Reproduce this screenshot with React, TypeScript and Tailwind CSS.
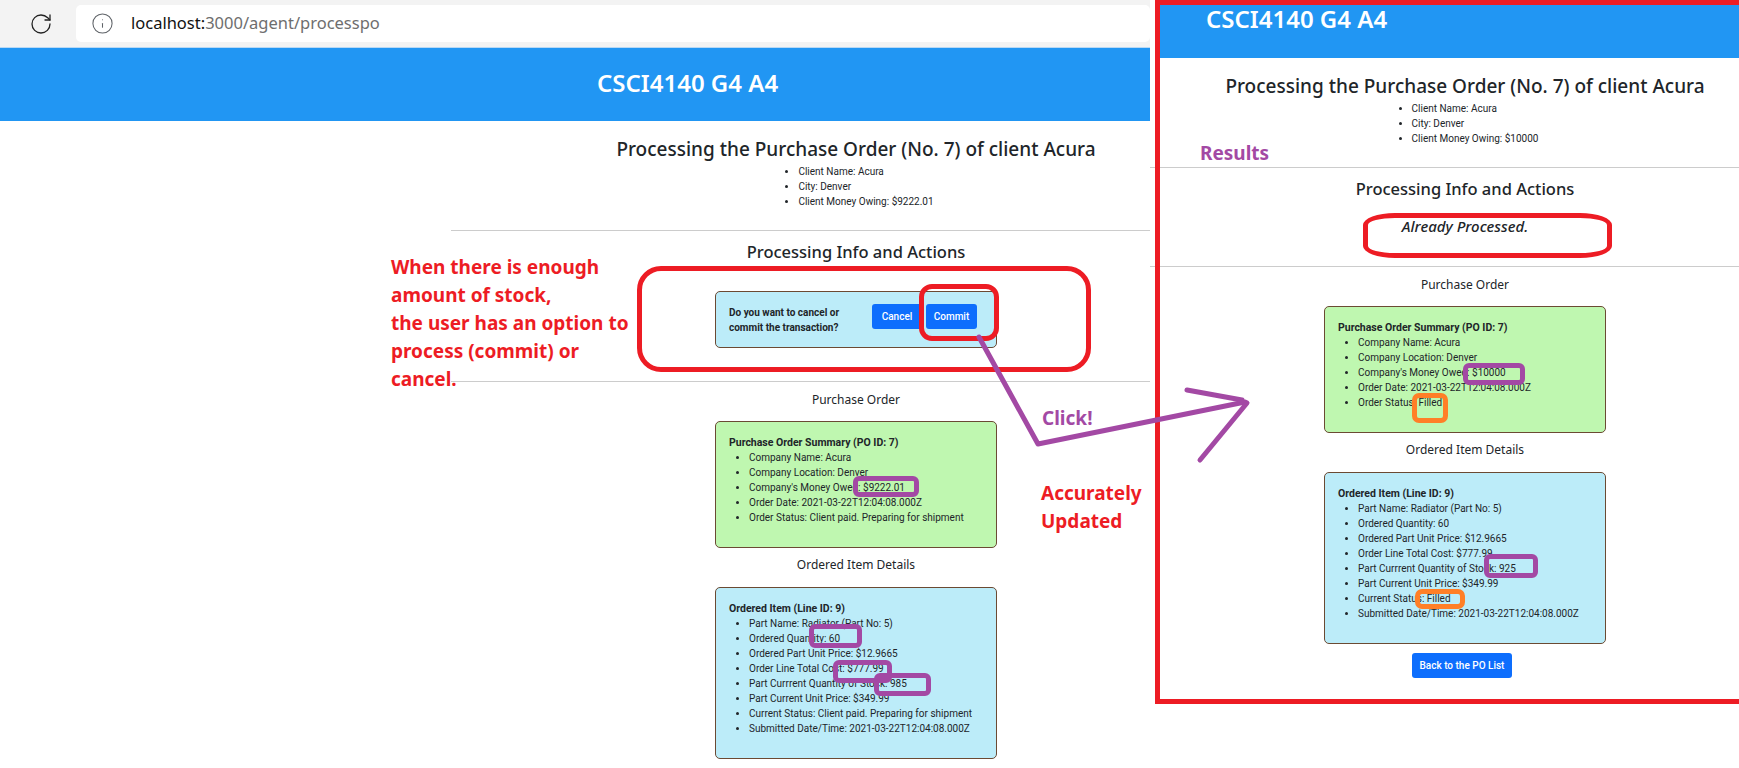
import { Info, RotateCw } from 'lucide-react';

const uiFont = "font-['Noto_Sans','Open_Sans',sans-serif]";
const smallFont = "font-['Roboto','Noto_Sans',sans-serif]";

function Row({ children }: { children: React.ReactNode }) {
  return <li className="h-[15px] whitespace-nowrap">{children}</li>;
}

function InfoBox({ title, color, rows }: { title: string; color: string; rows: string[] }) {
  return (
    <div className={`w-[282px] rounded-[5px] border border-[#6b4a33] pl-[13px] pt-[13px] pb-[22px] text-[10px] leading-[15px] text-[#212529] ${smallFont} ${color}`}>
      <div className="h-[15px] text-[10.5px] font-bold whitespace-nowrap">{title}</div>
      <ul className="list-disc pl-5">
        {rows.map((row) => (
          <Row key={row}>{row}</Row>
        ))}
      </ul>
    </div>
  );
}

function ClientHead({ owing }: { owing: string }) {
  return (
    <>
      <h4 className="mt-4 h-6 text-[19px] leading-6 font-medium whitespace-nowrap">
        Processing the Purchase Order (No. 7) of client Acura
      </h4>
      <ul className={`mt-[3px] list-disc pl-5 text-[10px] leading-[15px] ${smallFont}`}>
        <Row>Client Name: Acura</Row>
        <Row>City: Denver</Row>
        <Row>Client Money Owing: {owing}</Row>
      </ul>
    </>
  );
}

function Divider({ className }: { className: string }) {
  return <div className={`h-px shrink-0 self-stretch bg-[#cccccc] ${className}`}></div>;
}

function Details({ moneyOwed, status, quantity, stock }: { moneyOwed: string; status: string; quantity: string; stock: string }) {
  return (
    <>
      <div className="mt-[9px] h-[18px] text-[12px] leading-[18px]">Purchase Order</div>
      <div className="mt-[12px]">
        <InfoBox
          title="Purchase Order Summary (PO ID: 7)"
          color="bg-[#bff7b0]"
          rows={[
            'Company Name: Acura',
            'Company Location: Denver',
            `Company's Money Owed: ${moneyOwed}`,
            'Order Date: 2021-03-22T12:04:08.000Z',
            `Order Status: ${status}`,
          ]}
        />
      </div>
      <div className="mt-[8px] h-[18px] text-[12px] leading-[18px]">Ordered Item Details</div>
      <div className="mt-[13px]">
        <InfoBox
          title="Ordered Item (Line ID: 9)"
          color="bg-[#bcecf9]"
          rows={[
            'Part Name: Radiator (Part No: 5)',
            `Ordered Quantity: ${quantity}`,
            'Ordered Part Unit Price: $12.9665',
            'Order Line Total Cost: $777.99',
            `Part Currrent Quantity of Stock: ${stock}`,
            'Part Current Unit Price: $349.99',
            `Current Status: ${status}`,
            'Submitted Date/Time: 2021-03-22T12:04:08.000Z',
          ]}
        />
      </div>
    </>
  );
}

export default function App() {
  return (
    <div className={`relative h-[768px] w-[1739px] overflow-hidden bg-white text-[#212529] ${uiFont}`}>
      {/* Left window: before commit */}
      <div className="h-[768px] w-[1150px] overflow-hidden">
        <div className="flex h-[48px] items-center border-b border-[#b9d9f5] bg-[#f3f3f3] pl-[29px]">
          <RotateCw size={24} strokeWidth={1.3} className="text-[#222222]" />
          <div className="ml-[23px] flex h-[37px] flex-1 items-center rounded-[5px] bg-white pl-[15px]">
            <Info size={23} strokeWidth={1.1} className="text-[#5f6368]" />
            <div className="ml-[17px] text-[16.5px] text-[#6e6e6e]">
              <span className="text-[#111111]">localhost:</span>3000/agent/processpo
            </div>
          </div>
        </div>
        <div className="flex h-[73px] items-center bg-[#2196f3] pb-[3px] pl-[597px] text-[24px] font-semibold text-white">
          CSCI4140 G4 A4
        </div>
        <div className="ml-[451px] flex w-[810px] flex-col items-center">
          <ClientHead owing="$9222.01" />
          <Divider className="mt-[21px]" />
          <div className="mt-[10px] h-[22px] text-[16.5px] leading-[22px] font-medium">Processing Info and Actions</div>
          <div className="mt-[28px] flex h-[57px] w-[282px] items-center rounded-[5px] border border-[#6b4a33] bg-[#bcecf9] pl-[13px]">
            <div className={`w-[143px] pr-4 text-[10px] leading-[15px] font-bold ${smallFont}`}>
              Do you want to cancel or commit the transaction?
            </div>
            <div className={`mb-[6px] flex gap-1 ${smallFont}`}>
              <button className="h-[25px] w-[50px] rounded-[3px] bg-[#0d6efd] text-[10px] font-medium text-white">Cancel</button>
              <button className="h-[25px] w-[51px] rounded-[3px] bg-[#0d6efd] text-[10px] font-medium text-white">Commit</button>
            </div>
          </div>
          <Divider className="mt-[33px]" />
          <Details moneyOwed="$9222.01" status="Client paid. Preparing for shipment" quantity="60" stock="985" />
        </div>
      </div>

      {/* Right window: after commit, pasted over the first one */}
      <div className="absolute top-0 left-[1150px] h-[704px] w-[589px] overflow-hidden bg-white">
        <div className="ml-[5px] flex h-[58px] items-center bg-[#2196f3] pb-[20px] pl-[51px] text-[24px] font-semibold text-white">
          CSCI4140 G4 A4
        </div>
        <div className="flex w-[630px] flex-col items-center">
          <ClientHead owing="$10000" />
          <Divider className="mt-[21px]" />
          <div className="mt-[10px] h-[22px] text-[16.5px] leading-[22px] font-medium">Processing Info and Actions</div>
          <div className="mt-[16px] h-5 text-[15px] leading-5 font-medium italic">Already Processed.</div>
          <Divider className="mt-[30px]" />
          <Details moneyOwed="$10000" status="Filled" quantity="60" stock="925" />
          <button className={`mt-[9px] mr-[6px] h-[25px] w-[100px] rounded-[3px] bg-[#0d6efd] text-[10px] font-medium text-white ${smallFont}`}>Back to the PO List</button>
        </div>
      </div>
      <div className="absolute top-0 left-[1155px] h-[704px] w-[600px] border-[5px] border-[#ed1c24]"></div>

      {/* Hand-drawn marks on top of the screenshots */}
      <div className="absolute top-[266px] left-[637px] h-[106px] w-[454px] rounded-[24px] border-[5px] border-[#ed1c24]"></div>
      <div className="absolute top-[284px] left-[919px] h-[57px] w-[80px] rounded-[13px] border-[5px] border-[#ed1c24]"></div>
      <div className="absolute top-[213px] left-[1363px] h-[45px] w-[249px] rounded-[32px/12px] border-[5px] border-[#ed1c24]"></div>

      <div className="absolute top-[476px] left-[853px] h-[21px] w-[66px] rounded-[6px] border-[5px] border-[#a349a4]"></div>
      <div className="absolute top-[624px] left-[809px] h-[24px] w-[53px] rounded-[6px] border-[5px] border-[#a349a4]"></div>
      <div className="absolute top-[660px] left-[833px] h-[23px] w-[59px] rounded-[6px] border-[5px] border-[#a349a4]"></div>
      <div className="absolute top-[673px] left-[874px] h-[23px] w-[57px] rounded-[6px] border-[5px] border-[#a349a4]"></div>
      <div className="absolute top-[363px] left-[1463px] h-[22px] w-[62px] rounded-[6px] border-[5px] border-[#a349a4]"></div>
      <div className="absolute top-[554px] left-[1484px] h-[24px] w-[54px] rounded-[6px] border-[5px] border-[#a349a4]"></div>
      <div className="absolute top-[393px] left-[1412px] h-[30px] w-[36px] rounded-[7px] border-[5px] border-[#ff7f27]"></div>
      <div className="absolute top-[589px] left-[1415px] h-[20px] w-[50px] rounded-[7px] border-[5px] border-[#ff7f27]"></div>

      <svg className="absolute top-0 left-0" width="1739" height="768" fill="none" stroke="#a349a4" strokeWidth="5" strokeLinecap="round" strokeLinejoin="round">
        <path d="M979 337 L1038 444 L1245 402" />
        <path d="M1187 390 L1242 400" />
        <path d="M1200 460 L1247 403" />
      </svg>

      <div className="absolute top-[253px] left-[391px] w-[240px] text-[19px] leading-[28px] font-bold text-[#ed1c24]">
        When there is enough amount of stock,
        <br />
        the user has an option to process (commit) or cancel.
      </div>
      <div className="absolute top-[404px] left-[1042px] text-[19px] leading-[28px] font-bold text-[#a349a4]">Click!</div>
      <div className="absolute top-[479px] left-[1041px] text-[19px] leading-[28px] font-bold text-[#ed1c24]">
        Accurately
        <br />
        Updated
      </div>
      <div className="absolute top-[139px] left-[1200px] text-[19px] leading-[28px] font-bold text-[#a349a4]">Results</div>
    </div>
  );
}
